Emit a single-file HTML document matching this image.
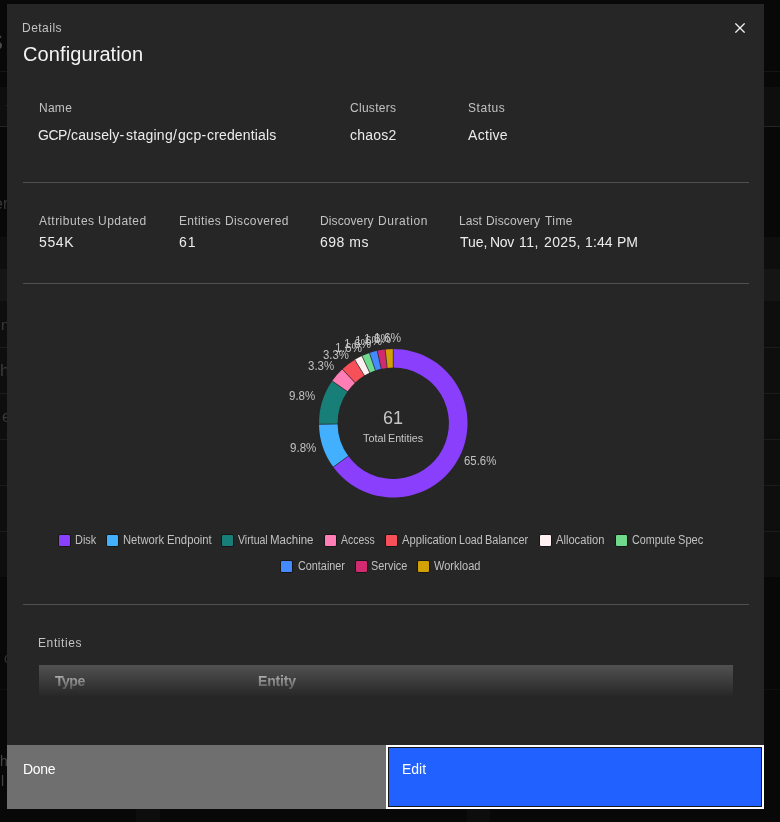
<!DOCTYPE html>
<html><head><meta charset="utf-8"><title>Configuration</title>
<style>
*{box-sizing:border-box;margin:0;padding:0}
html,body{width:780px;height:822px;overflow:hidden;background:#080808;font-family:"Liberation Sans",sans-serif;}
.abs{position:absolute;white-space:nowrap;line-height:1;will-change:transform}
.box{position:absolute}
.sx{display:inline-block;transform-origin:0 0}
#bg{position:absolute;left:0;top:0;width:780px;height:822px;background:#080808;overflow:hidden}
#bg .band{position:absolute;left:0;width:780px}
#bg .ln{position:absolute;left:0;width:780px;height:1px}
#bg .t{position:absolute;white-space:nowrap;line-height:1;color:#3c3c3c;font-size:14px;will-change:transform}
#modal{position:absolute;left:7px;top:4px;width:757px;height:805px;background:#262626}
.hr{position:absolute;left:23px;width:726px;height:1px;background:#505050}
.sw{position:absolute;width:13px;height:13px;border-radius:2px;border:1px solid #161616}
</style></head>
<body>
<div id="bg">
  <div class="ln" style="top:71px;background:#151515"></div>
  <div class="band" style="top:87px;height:39px;background:#0e0e0e"></div>
  <div class="ln" style="top:126px;background:#252525"></div>
  <div class="band" style="top:237px;height:32px;background:#0e0e0e"></div>
  <div class="band" style="top:269px;height:32px;background:#151515"></div>
  <div class="band" style="top:301px;height:276px;background:#0e0e0e"></div>
  <div class="ln" style="top:347px;background:#1c1c1c"></div>
  <div class="ln" style="top:393px;background:#1c1c1c"></div>
  <div class="ln" style="top:439px;background:#1c1c1c"></div>
  <div class="ln" style="top:485px;background:#1c1c1c"></div>
  <div class="ln" style="top:531px;background:#1c1c1c"></div>
  <div class="ln" style="top:689px;background:#0f0f0f"></div>
  <div class="band" style="top:809px;height:13px;left:136px;width:24px;background:#0d0d0d"></div>
  <div class="band" style="top:809px;height:13px;left:467px;width:23px;background:#0d0d0d"></div>
  <div class="t" style="left:-12px;top:25px;font-size:30px;color:#4c4c4c">s</div>
  <div class="t" style="left:-6px;top:196px;font-size:16px;color:#383838">en</div>
  <div class="t" style="left:1px;top:317px;font-size:15px;color:#3a3a3a">n</div>
  <div class="t" style="left:0px;top:362px;font-size:17px;color:#3a3a3a">h</div>
  <div class="t" style="left:2px;top:409px;font-size:16px;color:#3a3a3a">e</div>
  <div class="t" style="left:4px;top:651px;font-size:14px;color:#333333">c</div>
  <div class="t" style="left:0px;top:754px;font-size:14px;color:#454545">h</div>
  <div class="t" style="left:1px;top:774px;font-size:14px;color:#454545">l</div>
  <div class="box" style="left:6px;top:105px;width:1px;height:1px;background:#2a2a2a"></div>
</div>

<div id="modal"></div>

<svg class="abs" style="left:735px;top:23px" width="10" height="10" viewBox="0 0 10 10"><path d="M0.4 0.4L9.6 9.6M9.6 0.4L0.4 9.6" stroke="#f4f4f4" stroke-width="1.25" fill="none"/></svg>

<div class="hr" style="top:182px"></div>
<div class="hr" style="top:283px"></div>

<svg class="box" style="left:0;top:0" width="780" height="822" viewBox="0 0 780 822">
<path d="M393.25 349.00A74.25 74.25 0 1 1 333.31 467.06L348.28 456.12A55.7 55.7 0 1 0 393.25 367.55Z" fill="#8a3ffc"/>
<path d="M333.31 467.06A74.25 74.25 0 0 1 319.01 424.22L337.55 423.98A55.7 55.7 0 0 0 348.28 456.12Z" fill="#42b0ff"/>
<path d="M319.01 424.22A74.25 74.25 0 0 1 332.18 381.01L347.44 391.57A55.7 55.7 0 0 0 337.55 423.98Z" fill="#187e78"/>
<path d="M332.18 381.01A74.25 74.25 0 0 1 342.37 369.18L355.08 382.68A55.7 55.7 0 0 0 347.44 391.57Z" fill="#ff7eb6"/>
<path d="M342.37 369.18A74.25 74.25 0 0 1 354.80 359.73L364.41 375.60A55.7 55.7 0 0 0 355.08 382.68Z" fill="#f85058"/>
<path d="M354.80 359.73A74.25 74.25 0 0 1 361.93 355.93L369.76 372.75A55.7 55.7 0 0 0 364.41 375.60Z" fill="#fff1f1"/>
<path d="M361.93 355.93A74.25 74.25 0 0 1 369.43 352.92L375.38 370.49A55.7 55.7 0 0 0 369.76 372.75Z" fill="#70da8c"/>
<path d="M369.43 352.92A74.25 74.25 0 0 1 377.21 350.75L381.22 368.86A55.7 55.7 0 0 0 375.38 370.49Z" fill="#4589ff"/>
<path d="M377.21 350.75A74.25 74.25 0 0 1 385.18 349.44L387.20 367.88A55.7 55.7 0 0 0 381.22 368.86Z" fill="#d12a71"/>
<path d="M385.18 349.44A74.25 74.25 0 0 1 393.25 349.00L393.25 367.55A55.7 55.7 0 0 0 387.20 367.88Z" fill="#d2a106"/>
<path d="M393.25 348.50L393.25 368.05" stroke="#262626" stroke-width="0.7" fill="none"/>
<path d="M332.90 467.36L348.68 455.82" stroke="#262626" stroke-width="0.7" fill="none"/>
<path d="M318.51 424.22L338.05 423.97" stroke="#262626" stroke-width="0.7" fill="none"/>
<path d="M331.77 380.73L347.85 391.85" stroke="#262626" stroke-width="0.7" fill="none"/>
<path d="M342.03 368.81L355.42 383.05" stroke="#262626" stroke-width="0.7" fill="none"/>
<path d="M354.54 359.30L364.67 376.03" stroke="#262626" stroke-width="0.7" fill="none"/>
<path d="M361.72 355.47L369.97 373.20" stroke="#262626" stroke-width="0.7" fill="none"/>
<path d="M369.27 352.45L375.54 370.97" stroke="#262626" stroke-width="0.7" fill="none"/>
<path d="M377.10 350.26L381.33 369.35" stroke="#262626" stroke-width="0.7" fill="none"/>
<path d="M385.13 348.94L387.25 368.38" stroke="#262626" stroke-width="0.7" fill="none"/>
</svg>

<div class="sw" style="left:58px;top:534px;background:#8a3ffc"></div>
<div class="sw" style="left:106px;top:534px;background:#42b0ff"></div>
<div class="sw" style="left:221px;top:534px;background:#187e78"></div>
<div class="sw" style="left:324px;top:534px;background:#ff7eb6"></div>
<div class="sw" style="left:385px;top:534px;background:#f85058"></div>
<div class="sw" style="left:539px;top:534px;background:#fff1f1"></div>
<div class="sw" style="left:615px;top:534px;background:#70da8c"></div>
<div class="sw" style="left:280px;top:560px;background:#4589ff"></div>
<div class="sw" style="left:355px;top:560px;background:#d12a71"></div>
<div class="sw" style="left:417px;top:560px;background:#d2a106"></div>

<div class="hr" style="top:604px"></div>

<div class="box" style="left:39px;top:665px;width:694px;height:32px;background:#525252"></div>
<div class="abs" id="h_type" style="left:55.00px;top:674.00px;font-size:14px;font-weight:bold;color:#f4f4f4;letter-spacing:-0.467px;">Type</div>
<div class="abs" id="h_entity" style="left:258.00px;top:674.00px;font-size:14px;font-weight:bold;color:#f4f4f4;letter-spacing:-0.180px;">Entity</div>
<div class="box" style="left:39px;top:665px;width:694px;height:32px;background:linear-gradient(to bottom,rgba(38,38,38,0),#262626)"></div>

<div class="box" style="left:7px;top:745px;width:379px;height:64px;background:#6f6f6f"></div>
<div class="box" style="left:386px;top:745px;width:378px;height:64px;background:#2161ff;border:2px solid #ffffff;box-shadow:inset 0 0 0 1px #161616"></div>

<div class="abs" id="t_details" style="left:22.00px;top:22.00px;font-size:12px;color:#c2c2c2;letter-spacing:0.483px;">Details</div>
<div class="abs" id="t_config" style="left:23.00px;top:44.00px;font-size:20px;color:#f4f4f4;letter-spacing:0.100px;">Configuration</div>
<div class="abs" id="l_name" style="left:39.00px;top:102.00px;font-size:12px;color:#c2c2c2;letter-spacing:0.267px;">Name</div>
<div class="abs" id="l_clusters" style="left:350.00px;top:102.00px;font-size:12px;color:#c2c2c2;letter-spacing:0.286px;">Clusters</div>
<div class="abs" id="l_status" style="left:468.00px;top:102.00px;font-size:12px;color:#c2c2c2;letter-spacing:0.540px;">Status</div>
<div class="abs" id="v_clusters" style="left:350.00px;top:128.00px;font-size:14px;color:#ececec;letter-spacing:0.240px;">chaos2</div>
<div class="abs" id="v_status" style="left:468.00px;top:128.00px;font-size:14px;color:#ececec;letter-spacing:0.300px;">Active</div>
<div class="abs" id="v_attr" style="left:39.00px;top:235.00px;font-size:14px;color:#ececec;letter-spacing:0.600px;">554K</div>
<div class="abs" id="v_ent" style="left:179.00px;top:235.00px;font-size:14px;color:#ececec;letter-spacing:0.900px;">61</div>
<div class="abs" id="v_dur" style="left:320.00px;top:235.00px;font-size:14px;color:#ececec;letter-spacing:0.520px;">698 ms</div>
<div class="abs" id="c_61" style="left:383.00px;top:409.00px;font-size:18px;color:#c6c6c6;"><span class="sx" style="transform:scaleX(1.0015)">61</span></div>
<div class="abs" id="p0" style="left:464.00px;top:455.00px;font-size:12px;color:#c0c0c0;"><span class="sx" style="transform:scaleX(0.9474)">65.6%</span></div>
<div class="abs" id="p1" style="left:290.00px;top:442.00px;font-size:12px;color:#c0c0c0;"><span class="sx" style="transform:scaleX(0.9630)">9.8%</span></div>
<div class="abs" id="p2" style="left:289.00px;top:390.00px;font-size:12px;color:#c0c0c0;"><span class="sx" style="transform:scaleX(0.9593)">9.8%</span></div>
<div class="abs" id="p3" style="left:308.00px;top:360.00px;font-size:12px;color:#c0c0c0;"><span class="sx" style="transform:scaleX(0.9561)">3.3%</span></div>
<div class="abs" id="p4" style="left:323.00px;top:349.00px;font-size:12px;color:#c0c0c0;"><span class="sx" style="transform:scaleX(0.9487)">3.3%</span></div>
<div class="abs" id="p5" style="left:335.00px;top:342.00px;font-size:12px;color:#c0c0c0;"><span class="sx" style="transform:scaleX(0.9928)">1.6%</span></div>
<div class="abs" id="p6" style="left:344.00px;top:338.00px;font-size:12px;color:#c0c0c0;"><span class="sx" style="transform:scaleX(0.9928)">1.6%</span></div>
<div class="abs" id="p7" style="left:355.00px;top:335.00px;font-size:12px;color:#c0c0c0;"><span class="sx" style="transform:scaleX(0.9928)">1.6%</span></div>
<div class="abs" id="p8" style="left:364.00px;top:333.00px;font-size:12px;color:#c0c0c0;"><span class="sx" style="transform:scaleX(0.9928)">1.6%</span></div>
<div class="abs" id="p9" style="left:374.00px;top:332.00px;font-size:12px;color:#c0c0c0;"><span class="sx" style="transform:scaleX(0.9928)">1.6%</span></div>
<div class="abs" id="g0" style="left:75.00px;top:534.00px;font-size:12px;color:#c0c0c0;"><span class="sx" style="transform:scaleX(0.9091)">Disk</span></div>
<div class="abs" id="g3" style="left:341.00px;top:534.00px;font-size:12px;color:#c0c0c0;"><span class="sx" style="transform:scaleX(0.8711)">Access</span></div>
<div class="abs" id="g5" style="left:556.00px;top:534.00px;font-size:12px;color:#c0c0c0;"><span class="sx" style="transform:scaleX(0.9297)">Allocation</span></div>
<div class="abs" id="g7" style="left:298.00px;top:560.00px;font-size:12px;color:#c0c0c0;"><span class="sx" style="transform:scaleX(0.9019)">Container</span></div>
<div class="abs" id="g8" style="left:371.00px;top:560.00px;font-size:12px;color:#c0c0c0;"><span class="sx" style="transform:scaleX(0.9083)">Service</span></div>
<div class="abs" id="g9" style="left:434.00px;top:560.00px;font-size:12px;color:#c0c0c0;"><span class="sx" style="transform:scaleX(0.9202)">Workload</span></div>
<div class="abs" id="l_entities" style="left:38.00px;top:637.00px;font-size:12px;color:#c2c2c2;letter-spacing:0.600px;">Entities</div>
<div class="abs" id="b_done" style="left:23.00px;top:762.00px;font-size:14px;color:#ffffff;letter-spacing:-0.333px;">Done</div>
<div class="abs" id="b_edit" style="left:402.00px;top:762.00px;font-size:14px;color:#ffffff;">Edit</div>
<div class="abs" id="v_name_0" style="left:38.00px;top:128.00px;font-size:14px;color:#ececec;letter-spacing:-0.467px;">GCP/</div>
<div class="abs" id="v_name_1" style="left:71.00px;top:128.00px;font-size:14px;color:#ececec;letter-spacing:0.143px;">causely-</div>
<div class="abs" id="v_name_2" style="left:126.00px;top:128.00px;font-size:14px;color:#ececec;letter-spacing:0.257px;">staging/</div>
<div class="abs" id="v_name_3" style="left:178.00px;top:128.00px;font-size:14px;color:#ececec;letter-spacing:0.333px;">gcp-</div>
<div class="abs" id="v_name_4" style="left:207.00px;top:128.00px;font-size:14px;color:#ececec;letter-spacing:0.160px;">credentials</div>
<div class="abs" id="v_last_0" style="left:460.00px;top:235.00px;font-size:14px;color:#ececec;">Tue,</div>
<div class="abs" id="v_last_1" style="left:490.00px;top:235.00px;font-size:14px;color:#ececec;letter-spacing:-0.300px;">Nov</div>
<div class="abs" id="v_last_2" style="left:519.00px;top:235.00px;font-size:14px;color:#ececec;letter-spacing:0.500px;">11,</div>
<div class="abs" id="v_last_3" style="left:544.00px;top:235.00px;font-size:14px;color:#ececec;letter-spacing:0.350px;">2025,</div>
<div class="abs" id="v_last_4" style="left:585.00px;top:235.00px;font-size:14px;color:#ececec;letter-spacing:0.133px;">1:44</div>
<div class="abs" id="v_last_5" style="left:617.00px;top:235.00px;font-size:14px;color:#ececec;">PM</div>
<div class="abs" id="l_attr_0" style="left:39.00px;top:215.00px;font-size:12px;color:#c2c2c2;letter-spacing:0.489px;">Attributes</div>
<div class="abs" id="l_attr_1" style="left:98.00px;top:215.00px;font-size:12px;color:#c2c2c2;letter-spacing:0.467px;">Updated</div>
<div class="abs" id="l_ent_0" style="left:179.00px;top:215.00px;font-size:12px;color:#c2c2c2;letter-spacing:0.343px;">Entities</div>
<div class="abs" id="l_ent_1" style="left:225.00px;top:215.00px;font-size:12px;color:#c2c2c2;letter-spacing:0.378px;">Discovered</div>
<div class="abs" id="l_dur_0" style="left:320.00px;top:215.00px;font-size:12px;color:#c2c2c2;letter-spacing:0.100px;">Discovery</div>
<div class="abs" id="l_dur_1" style="left:378.00px;top:215.00px;font-size:12px;color:#c2c2c2;letter-spacing:0.571px;">Duration</div>
<div class="abs" id="l_last_0" style="left:459.00px;top:215.00px;font-size:12px;color:#c2c2c2;letter-spacing:0.067px;">Last</div>
<div class="abs" id="l_last_1" style="left:486.00px;top:215.00px;font-size:12px;color:#c2c2c2;letter-spacing:0.150px;">Discovery</div>
<div class="abs" id="l_last_2" style="left:545.00px;top:215.00px;font-size:12px;color:#c2c2c2;letter-spacing:0.433px;">Time</div>
<div class="abs" id="g1_0" style="left:123.00px;top:534.00px;font-size:12px;color:#c0c0c0;"><span class="sx" style="transform:scaleX(0.9326)">Network</span></div>
<div class="abs" id="g1_1" style="left:167.00px;top:534.00px;font-size:12px;color:#c0c0c0;"><span class="sx" style="transform:scaleX(0.9437)">Endpoint</span></div>
<div class="abs" id="g2_0" style="left:238.00px;top:534.00px;font-size:12px;color:#c0c0c0;"><span class="sx" style="transform:scaleX(0.8788)">Virtual</span></div>
<div class="abs" id="g2_1" style="left:270.00px;top:534.00px;font-size:12px;color:#c0c0c0;"><span class="sx" style="transform:scaleX(0.9593)">Machine</span></div>
<div class="abs" id="g4_0" style="left:402.00px;top:534.00px;font-size:12px;color:#c0c0c0;"><span class="sx" style="transform:scaleX(0.9328)">Application</span></div>
<div class="abs" id="g4_1" style="left:459.00px;top:534.00px;font-size:12px;color:#c0c0c0;"><span class="sx" style="transform:scaleX(0.8880)">Load</span></div>
<div class="abs" id="g4_2" style="left:485.00px;top:534.00px;font-size:12px;color:#c0c0c0;"><span class="sx" style="transform:scaleX(0.9133)">Balancer</span></div>
<div class="abs" id="g6_0" style="left:632.00px;top:534.00px;font-size:12px;color:#c0c0c0;"><span class="sx" style="transform:scaleX(0.8938)">Compute</span></div>
<div class="abs" id="g6_1" style="left:678.00px;top:534.00px;font-size:12px;color:#c0c0c0;"><span class="sx" style="transform:scaleX(0.9239)">Spec</span></div>
<div class="abs" id="c_tot_0" style="left:363.00px;top:433.00px;font-size:11px;color:#c6c6c6;"><span class="sx" style="transform:scaleX(0.9833)">Total</span></div>
<div class="abs" id="c_tot_1" style="left:388.00px;top:433.00px;font-size:11px;color:#c6c6c6;"><span class="sx" style="transform:scaleX(0.9743)">Entities</span></div>

</body></html>
